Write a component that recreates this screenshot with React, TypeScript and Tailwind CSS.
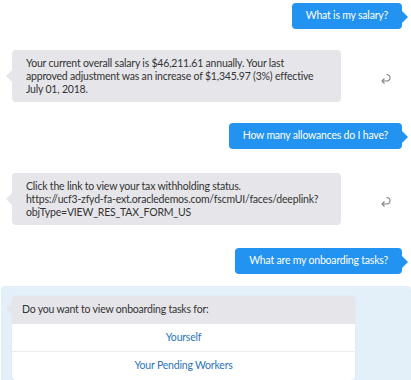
function ReplyIcon() {
  return (
    <svg width="12" height="11" viewBox="0 0 12 11" fill="none" className="text-[#808080]">
      <path d="M6.5 1.5 C9 1.5 10 3 10 4.8 C10 6.8 8.5 8 6.5 8 L2 8" stroke="currentColor" strokeWidth="1.1" />
      <path d="M4.5 5.5 L2 8 L4.5 10.5" stroke="currentColor" strokeWidth="1.1" />
    </svg>
  );
}

function UserBubble({ text }: { text: string }) {
  return (
    <div className="flex justify-end pr-[9px]">
      <div className="relative rounded-[4px] bg-[#2393f1] px-[14px] h-[26px] flex items-center whitespace-nowrap text-white">
        {text}
        <div className="absolute right-[-6px] top-[8px] w-0 h-0 border-y-[6px] border-y-transparent border-l-[6px] border-l-[#2393f1]" />
      </div>
    </div>
  );
}

function BotBubble({ lines }: { lines: string[] }) {
  return (
    <div className="flex items-center pl-[12px] pr-[16px]">
      <div className="relative w-[329px] rounded-[4px] bg-[#e6e6ea] px-[14px] py-[6.5px] leading-[13px] whitespace-nowrap text-[#333]">
        {lines.map((l) => (
          <div key={l}>{l}</div>
        ))}
        <div className="absolute left-[-6px] top-[20px] w-0 h-0 border-y-[6px] border-y-transparent border-r-[6px] border-r-[#e6e6ea]" />
      </div>
      <div className="ml-auto pr-[3px] pt-[4px]">
        <ReplyIcon />
      </div>
    </div>
  );
}

export default function App() {
  return (
    <div
      className="w-[411px] h-[380px] overflow-hidden bg-white text-[10.5px] tracking-[-0.2px]"
      style={{ fontFamily: 'Lato, "Noto Sans", sans-serif' }}
    >
      <div className="pt-[3px]">
        <UserBubble text="What is my salary?" />
      </div>
      <div className="mt-[21px]">
        <BotBubble
          lines={[
            'Your current overall salary is $46,211.61 annually. Your last',
            'approved adjustment was an increase of $1,345.97 (3%) effective',
            'July 01, 2018.',
          ]}
        />
      </div>
      <div className="mt-[21px]">
        <UserBubble text="How many allowances do I have?" />
      </div>
      <div className="mt-[24px]">
        <BotBubble
          lines={[
            'Click the link to view your tax withholding status.',
            'https://ucf3-zfyd-fa-ext.oracledemos.com/fscmUI/faces/deeplink?',
            'objType=VIEW_RES_TAX_FORM_US',
          ]}
        />
      </div>
      <div className="mt-[23px]">
        <UserBubble text="What are my onboarding tasks?" />
      </div>
      <div className="mt-[12px] ml-[1px] rounded-[4px] bg-[#e3f0f9] pt-[10px] pl-[11px] pr-[56px] h-[120px]">
        <div className="relative rounded-[4px] bg-white shadow-[0_0_1px_rgba(0,0,0,0.15)]">
          <div className="rounded-t-[4px] bg-[#e6e6ea] px-[10px] h-[28px] flex items-center text-[#333]">
            Do you want to view onboarding tasks for:
          </div>
          <div className="absolute left-[-6px] top-[7px] w-0 h-0 border-y-[6px] border-y-transparent border-r-[6px] border-r-[#e6e6ea]" />
          <div className="h-[28px] flex items-center justify-center text-[#2a74bd] border-b border-[#ececec]">
            Yourself
          </div>
          <div className="h-[28px] flex items-center justify-center text-[#2a74bd]">
            Your Pending Workers
          </div>
        </div>
      </div>
    </div>
  );
}
